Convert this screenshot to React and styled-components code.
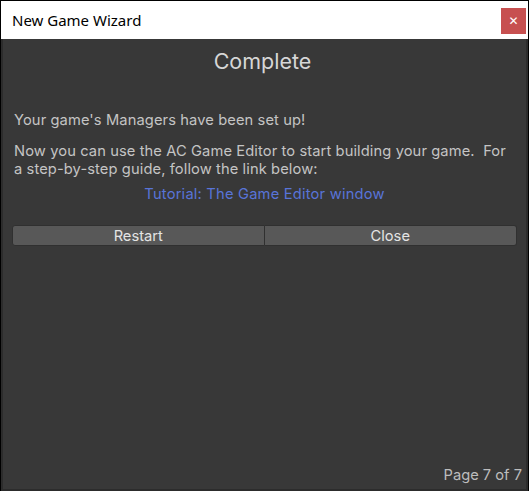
import styled, { createGlobalStyle } from "styled-components";

const GlobalStyle = createGlobalStyle`
  html, body {
    margin: 0;
    padding: 0;
    background: #ffffff;
  }
  * {
    box-sizing: border-box;
  }
`;

const Window = styled.div`
  width: 529px;
  height: 491px;
  display: flex;
  flex-direction: column;
  border: 1px solid #000;
  border-bottom: none;
  background: #000;
`;

const TitleBar = styled.div`
  height: 38px;
  background: #ffffff;
  display: flex;
  align-items: center;
  justify-content: space-between;
  padding: 0 2px 0 11px;
  font-family: "Segoe UI", "Noto Sans", sans-serif;
  font-size: 15px;
  color: #000;
`;

const CloseButton = styled.button`
  width: 25px;
  height: 26px;
  margin-top: 2px;
  border: none;
  background: #c75050;
  color: #fff;
  font-family: "DejaVu Sans", sans-serif;
  font-size: 12px;
  font-weight: bold;
  padding: 0;
  display: flex;
  align-items: center;
  justify-content: center;
`;

const Body = styled.div`
  flex: 1;
  display: flex;
  flex-direction: column;
  background: #383838;
  border-left: 2px solid #2c2c2c;
  border-right: 2px solid #2c2c2c;
  border-bottom: 2px solid #2c2c2c;
  padding: 10px 9px 5px 9px;
  font-family: Inter, "Noto Sans", sans-serif;
  color: #c4c4c4;
  font-size: 14.7px;
`;

const Heading = styled.h1`
  margin: 0 4px 0 0;
  text-align: center;
  font-weight: 400;
  font-size: 21.5px;
  line-height: 24px;
  color: #d6d6d6;
`;

const Paragraph = styled.p`
  margin: 0 3px 0 2px;
  margin-top: ${(p) => p.$top || 0}px;
  line-height: 18px;
  letter-spacing: 0.1px;
`;

const Link = styled.a`
  display: block;
  text-align: center;
  color: #5874d8;
  margin-top: 7px;
  line-height: 18px;
  letter-spacing: 0.2px;
  text-decoration: none;
`;

const ButtonRow = styled.div`
  display: grid;
  grid-template-columns: 1fr 1fr;
  margin-top: 22px;
`;

const Button = styled.button`
  height: 21px;
  background: #585858;
  border: 1px solid #303030;
  color: #e4e4e4;
  font-family: Inter, "Noto Sans", sans-serif;
  font-size: 14.7px;
  padding: 0;
  border-radius: ${(p) => (p.$side === "left" ? "3px 0 0 3px" : "0 3px 3px 0")};
  ${(p) => p.$side === "right" && "border-left: none;"}
`;

const Footer = styled.div`
  margin-top: auto;
  margin-right: -5px;
  text-align: right;
  line-height: 18px;
  color: #bdbdbd;
`;

export default function App() {
  return (
    <>
      <GlobalStyle />
      <Window>
        <TitleBar>
          <span>New Game Wizard</span>
          <CloseButton>✕</CloseButton>
        </TitleBar>
        <Body>
          <Heading>Complete</Heading>
          <Paragraph $top={38}>Your game's Managers have been set up!</Paragraph>
          <Paragraph $top={13}>
            Now you can use the AC Game Editor to start building your game.&nbsp; For a
            step-by-step guide, follow the link below:
          </Paragraph>
          <Link href="#">Tutorial: The Game Editor window</Link>
          <ButtonRow>
            <Button $side="left">Restart</Button>
            <Button $side="right">Close</Button>
          </ButtonRow>
          <Footer>Page 7 of 7</Footer>
        </Body>
      </Window>
    </>
  );
}
